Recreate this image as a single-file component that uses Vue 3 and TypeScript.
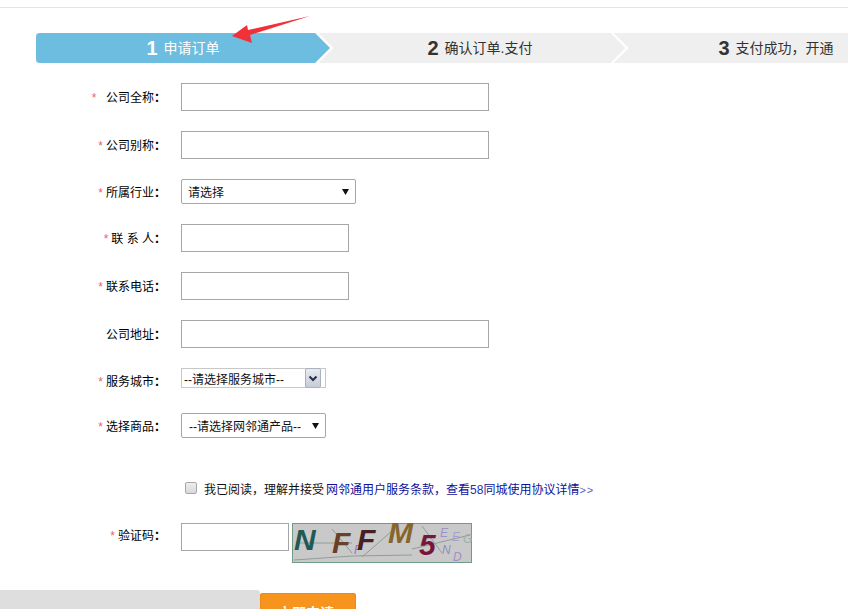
<script setup lang="ts">
interface Field {
  star: string
  label: string
  kind: 'wide' | 'short' | 'select' | 'city' | 'product'
  options?: string[]
}
const fields: Field[] = [
  { star: '*  ', label: '公司全称', kind: 'wide' },
  { star: '*', label: '公司别称', kind: 'wide' },
  { star: '*', label: '所属行业', kind: 'select', options: ['请选择'] },
  { star: '*', label: '联 系 人', kind: 'short' },
  { star: '*', label: '联系电话', kind: 'short' },
  { star: '', label: '公司地址', kind: 'wide' },
  { star: '*', label: '服务城市', kind: 'city' },
  { star: '*', label: '选择商品', kind: 'product', options: ['--请选择网邻通产品--'] }
]
const steps = [
  { n: '1', text: '申请订单', cls: 'step-active' },
  { n: '2', text: '确认订单.支付', cls: 'step-mid' },
  { n: '3', text: '支付成功，开通', cls: 'step-last' }
]
</script>

<template>
  <div class="page">
    <div class="topline"></div>
    <div class="steps">
      <div v-for="s in steps" :key="s.n" class="step" :class="s.cls">
        <b class="num">{{ s.n }}</b><span class="step-text">{{ s.text }}</span>
      </div>
      <svg class="chevron chevron-a" width="20" height="30" viewBox="0 0 20 30">
        <path d="M0 0 L15 15 L0 30" fill="none" stroke="#fff" stroke-width="2" />
      </svg>
      <svg class="chevron chevron-b" width="20" height="30" viewBox="0 0 20 30">
        <path d="M1 0 L16 15 L1 30" fill="none" stroke="#fff" stroke-width="2" />
      </svg>
      <svg class="arrow" width="90" height="34" viewBox="0 0 90 34">
        <path d="M84 0 L24 19 L26 27 L6 20 L21 9 L22 14 Z" fill="#f23038" />
      </svg>
    </div>

    <form class="form" @submit.prevent>
      <div v-for="f in fields" :key="f.label" class="row" :class="'row-' + f.kind">
        <label class="label"><span class="star">{{ f.star }}</span>{{ f.label }}<b class="colon">：</b></label>
        <input v-if="f.kind === 'wide'" class="input input-wide" type="text" />
        <input v-else-if="f.kind === 'short'" class="input input-short" type="text" />
        <div v-else-if="f.kind === 'city'" class="city">
          <span class="city-text">--请选择服务城市--</span>
          <span class="city-btn">
            <svg width="10" height="7" viewBox="0 0 10 7"><path d="M1.500 1.500 L5 5 L8.500 1.500" fill="none" stroke="#26304a" stroke-width="2" /></svg>
          </span>
        </div>
        <div v-else class="fake-select" :class="'fake-' + f.kind">
          <span>{{ f.options?.[0] }}</span>
          <svg width="7" height="7" viewBox="0 0 7 7"><path d="M0 1 H7 L3.500 7 Z" fill="#111" /></svg>
        </div>
      </div>

      <div class="agree">
        <span class="check"></span>
        <span class="agree-text">我已阅读，理解并接受</span>
        <a class="link">网邻通用户服务条款，查看<span class="num58">58</span>同城使用协议详情<span class="more">&gt;&gt;</span></a>
      </div>

      <div class="row row-code">
        <label class="label"><span class="star">*</span>验证码<b class="colon">：</b></label>
        <input class="input input-code" type="text" />
        <svg class="captcha" width="180" height="40" viewBox="0 0 180 40">
          <rect x="0.500" y="0.500" width="179" height="39" fill="#c9c9c9" stroke="#6f9c86" />
          <path d="M2 37 L60 33 L120 32 M40 6 L60 30 M100 8 L70 34 M4 20 H60 M120 26 L178 12 M130 3 L150 30" fill="none" stroke="#8f9f96" stroke-width="1" />
          <text x="148" y="14" class="cap-small" fill="#9a94c8">E</text>
          <text x="160" y="18" class="cap-small" fill="#a8a0cc">E</text>
          <text x="171" y="20" class="cap-small" fill="#9fb0a8">G</text>
          <text x="150" y="31" class="cap-small" fill="#8d8fc0">N</text>
          <text x="161" y="38" class="cap-small" fill="#a08fc8">D</text>
          <text x="62" y="31" class="cap-small" fill="#a070c0">F</text>
          <text x="2" y="27" class="cap-big" fill="#1f5a55">N</text>
          <text x="40" y="30" class="cap-big" fill="#6b4028">F</text>
          <text x="65" y="27" class="cap-big" fill="#452024">F</text>
          <text x="96" y="20" class="cap-big" fill="#86662c">M</text>
          <text x="127" y="32" class="cap-big" fill="#77163a">5</text>
        </svg>
      </div>
    </form>

    <div class="footer">
      <div class="footer-bar"></div>
      <button class="submit" type="button">立即申请</button>
    </div>
  </div>
</template>

<style>
html, body { margin: 0; overflow: hidden; background: #fff; }
</style>

<style scoped>
.page {
  width: 848px;
  height: 609px;
  overflow: hidden;
  padding-top: 7px;
  box-sizing: border-box;
  font-family: "Liberation Sans", "Noto Sans CJK SC", sans-serif;
  font-size: 12px;
  color: #111;
}
.topline { height: 1px; background: #e4e4e4; }

.steps {
  position: relative;
  display: flex;
  width: 900px;
  height: 30px;
  margin: 25px 0 20px 36px;
  background: #efefef;
}
.step {
  display: flex;
  flex: none;
  align-items: center;
  justify-content: center;
  height: 30px;
  color: #333;
  font-size: 14px;
}
.step-active {
  width: 294px;
  background: #6cbde0;
  color: #fff;
  border-radius: 4px 0 0 4px;
  clip-path: polygon(0 0, 279px 0, 294px 15px, 279px 30px, 0 30px);
}
.step-mid { width: 300px; }
.step-last { width: 292px; }
.num { font-size: 20px; margin-right: 6px; line-height: 30px; }
.step-text { line-height: 30px; }
.chevron { position: absolute; top: 0; }
.chevron-a { left: 281px; }
.chevron-b { left: 575px; }
.arrow { position: absolute; left: 190px; top: -17px; }

.form { display: flex; flex-direction: column; }
.row { display: flex; align-items: center; margin-bottom: 20px; }
.row-select, .row-product { height: 25px; }
.row-city { height: 20px; margin-bottom: 25px; }
.row-product { margin-bottom: 40px; }
.label {
  width: 166px;
  margin-right: 15px;
  text-align: right;
  white-space: pre-wrap;
  color: #000;
  flex: none;
}
.row-wide .label, .row-short .label { padding-bottom: 2px; }
.row-city .label { padding-top: 4px; }
.colon { font-weight: bold; }
.star { color: #e8607a; margin-right: 3px; }
.input {
  box-sizing: border-box;
  height: 28px;
  border: 1px solid #a6a6a6;
  background: #fff;
  padding: 0 6px;
  outline: none;
}
.input-wide { width: 308px; }
.input-short { width: 168px; }
.input-code { width: 108px; }

.fake-select {
  box-sizing: border-box;
  display: flex;
  align-items: center;
  justify-content: space-between;
  width: 175px;
  height: 25px;
  border: 1px solid #a6a6a6;
  border-radius: 2px;
  padding: 0 6px;
  background: #fff;
  color: #111;
}
.fake-product { width: 145px; padding-left: 7px; }

.city {
  box-sizing: border-box;
  display: flex;
  align-items: center;
  justify-content: space-between;
  width: 145px;
  height: 20px;
  border: 1px solid #c8c8c8;
  padding-left: 2px;
}
.city-btn {
  display: flex;
  align-items: center;
  justify-content: center;
  width: 16px;
  height: 20px;
  margin: -1px 4px -1px 0;
  border: 1px solid #aab2c0;
  border-radius: 2px;
  box-sizing: border-box;
  background: linear-gradient(#e8ebf1, #c6ccd8);
  flex: none;
}

.agree {
  display: flex;
  align-items: center;
  height: 20px;
  margin: 0 0 25px 185px;
}
.check {
  box-sizing: border-box;
  width: 12px;
  height: 12px;
  margin-right: 7px;
  border: 1px solid #a8a8a8;
  border-radius: 2px;
  background: linear-gradient(#eee, #d8d8d8);
}
.agree-text { color: #111; margin-right: 2px; }
.link { color: #10109a; }
.num58 { color: #2a2ab0; }
.more { color: #5a5ad0; font-size: 11px; letter-spacing: 1px; }

.row-code { height: 40px; align-items: flex-start; margin-bottom: 27px; }
.row-code .label { line-height: 26px; }
.captcha { margin-left: 3px; flex: none; }
.cap-big { font: italic bold 30px "Liberation Sans", sans-serif; }
.cap-small { font: italic 12px "Liberation Sans", sans-serif; }

.footer { display: flex; align-items: flex-start; }
.footer-bar {
  width: 260px;
  height: 40px;
  background: #dedede;
  border-top-right-radius: 3px;
}
.submit {
  width: 96px;
  height: 38px;
  margin-top: 3px;
  padding: 0 4px 0 0;
  border: 1px solid #ec8a18;
  border-radius: 2px;
  background: #f7941e;
  color: #fff;
  font-family: inherit;
  font-size: 14px;
  font-weight: bold;
}
</style>
